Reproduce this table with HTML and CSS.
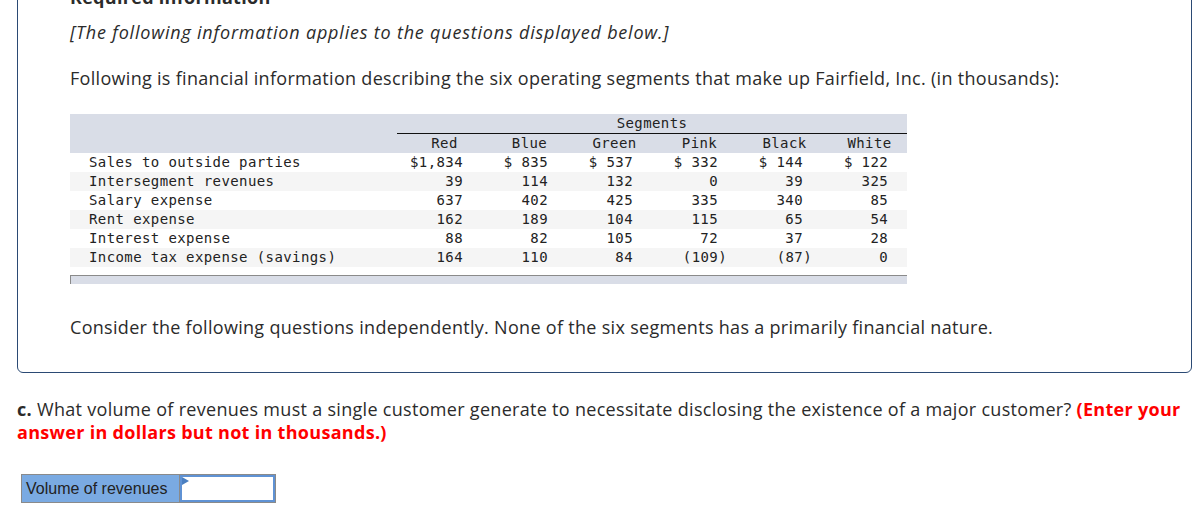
FILE: index.html
```html
<!DOCTYPE html>
<html lang="en">
<head>
<meta charset="utf-8">
<title>Required information</title>
<link rel="stylesheet" href="styles.css">
</head>
<body>
<div class="page">
  <section class="info-box">
    <h3 class="info-title">Required information</h3>
    <p class="note">[The following information applies to the questions displayed below.]</p>
    <p class="lead">Following is financial information describing the six operating segments that make up Fairfield, Inc. (in thousands):</p>
    <div class="tbl">
      <table class="fin">
        <colgroup>
          <col class="c-label"><col class="c-num"><col class="c-num"><col class="c-num"><col class="c-num"><col class="c-num"><col class="c-num">
        </colgroup>
        <thead>
          <tr class="h1"><th></th><th colspan="6" class="seg">Segments</th></tr>
          <tr class="h2"><th></th><th>Red</th><th>Blue</th><th>Green</th><th>Pink</th><th>Black</th><th>White</th></tr>
        </thead>
        <tbody>
          <tr><td class="lbl">Sales to outside parties</td><td>$1,834</td><td>$ 835</td><td>$ 537</td><td>$ 332</td><td>$ 144</td><td>$ 122</td></tr>
          <tr><td class="lbl">Intersegment revenues</td><td>39</td><td>114</td><td>132</td><td>0</td><td>39</td><td>325</td></tr>
          <tr><td class="lbl">Salary expense</td><td>637</td><td>402</td><td>425</td><td>335</td><td>340</td><td>85</td></tr>
          <tr><td class="lbl">Rent expense</td><td>162</td><td>189</td><td>104</td><td>115</td><td>65</td><td>54</td></tr>
          <tr><td class="lbl">Interest expense</td><td>88</td><td>82</td><td>105</td><td>72</td><td>37</td><td>28</td></tr>
          <tr><td class="lbl">Income tax expense (savings)</td><td>164</td><td>110</td><td>84</td><td>(109<span class="paren">)</span></td><td>(87<span class="paren">)</span></td><td>0</td></tr>
        </tbody>
      </table>
      <div class="tbl-foot"></div>
    </div>
    <p class="closing">Consider the following questions independently. None of the six segments has a primarily financial nature.</p>
  </section>

  <p class="question"><b>c.</b> What volume of revenues must a single customer generate to necessitate disclosing the existence of a major customer? <strong class="warn">(Enter your answer in dollars but not in thousands.)</strong></p>

  <div class="answer">
    <label class="answer-label" for="vol">Volume of revenues</label>
    <div class="answer-field">
      <span class="flag"></span>
      <input id="vol" class="answer-input" type="text">
    </div>
  </div>
</div>
</body>
</html>
```

FILE: styles.css
```css
* { box-sizing: border-box; }

html, body {
  margin: 0;
  padding: 0;
  background: #fff;
}

body {
  font-family: "Open Sans", Lato, "Liberation Sans", sans-serif;
  color: #2b2b2b;
  font-size: 18px;
  letter-spacing: 0.3px;
}

.page {
  margin: -15px 11px 0 17px;
}

.info-box {
  border: 1px solid #2b4a74;
  border-radius: 6px;
  padding: 0 0 34px 52px;
}

.info-title {
  margin: 0;
  font-size: 18px;
  line-height: 22px;
  font-weight: 700;
  color: #2b2b2b;
}

.note {
  margin: 13px 0 0;
  line-height: 22px;
  font-style: italic;
  letter-spacing: 0.8px;
}

.lead {
  margin: 24px 0 0;
  line-height: 22px;
}

.tbl {
  margin-top: 25px;
  width: 837px;
}

.fin {
  border-collapse: collapse;
  table-layout: fixed;
  width: 837px;
  font-family: "DejaVu Sans Mono", "Liberation Mono", monospace;
  font-size: 14px;
  letter-spacing: 0.4px;
  color: #222;
}

.c-label { width: 327px; }
.c-num { width: 85px; }

.fin th,
.fin td {
  padding: 0;
  height: 19px;
  line-height: 19px;
  white-space: pre;
  font-weight: 400;
}

.fin thead tr { background: #d9dde7; }

.fin .seg {
  text-align: center;
  border-bottom: 1px solid #111;
}

.fin .h2 th {
  text-align: center;
  padding-left: 10px;
}

.fin td {
  text-align: right;
  padding-right: 19px;
}

.fin td.lbl {
  text-align: left;
  padding: 0 0 0 19px;
}

.fin tbody tr:nth-child(even) { background: #f5f5f5; }

.paren { margin-right: -9px; }

.tbl-foot {
  margin-top: 8px;
  height: 9px;
  background: #d9dde7;
  border-top: 1px solid #8a8a8a;
  border-left: 1px solid #8a8a8a;
}

.closing {
  margin: 32px 0 0;
  line-height: 22px;
}

.question {
  margin: 25px 0 0;
  line-height: 23px;
}

.question b { font-weight: 700; }

.warn {
  color: #f00;
  font-weight: 700;
}

.answer {
  margin: 30px 0 0 4px;
  display: flex;
  width: 255px;
  height: 29px;
  border: 1px solid #8a8a8a;
  letter-spacing: 0;
}

.answer-label {
  flex: 0 0 158px;
  background: #7aaae2;
  font-family: "Liberation Sans", Arial, sans-serif;
  font-size: 16px;
  line-height: 27px;
  padding-left: 4px;
  color: #222;
  white-space: nowrap;
  border-right: 1px solid #8a8a8a;
}

.answer-field {
  position: relative;
  flex: 1 1 0;
  min-width: 0;
  display: flex;
}

.answer-input {
  flex: 1 1 0;
  width: 0;
  min-width: 0;
  margin: 0;
  border: 2px solid #5f92d4;
  background: #fff;
  outline: none;
}

.flag {
  position: absolute;
  left: 2px;
  top: 2px;
  width: 0;
  height: 0;
  border-top: 4px solid transparent;
  border-bottom: 4px solid transparent;
  border-left: 7px solid #4a7fc1;
}
```
